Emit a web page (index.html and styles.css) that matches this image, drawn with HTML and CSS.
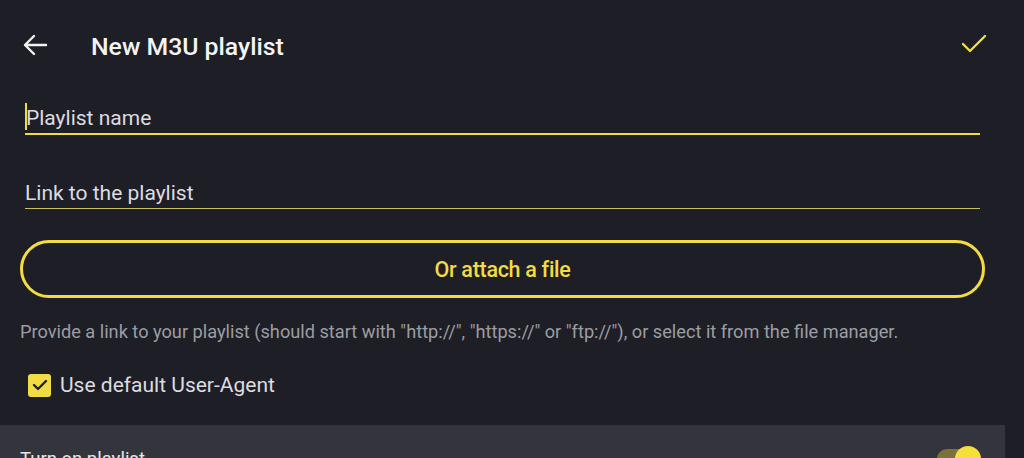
FILE: index.html
```html
<!DOCTYPE html>
<html>
<head>
<meta charset="utf-8">
<link rel="stylesheet" href="styles.css">
</head>
<body>
<div class="screen">
  <header class="topbar">
    <svg class="back" width="26" height="24" viewBox="0 0 26 24">
      <path d="M24 12 H3 M12 3 L3 12 L12 21" fill="none" stroke="#f2f2f2" stroke-width="2.4" stroke-linecap="round" stroke-linejoin="round"/>
    </svg>
    <h1 class="title">New M3U playlist</h1>
    <svg class="done" width="26" height="20" viewBox="0 0 26 20">
      <path d="M2 10 L9 17 L24 2" fill="none" stroke="#f1dc45" stroke-width="2.4" stroke-linecap="round" stroke-linejoin="round"/>
    </svg>
  </header>

  <div class="form">
    <div class="field field-active"><span class="caret"></span><span class="placeholder">Playlist name</span></div>
    <div class="field field-idle"><span class="placeholder">Link to the playlist</span></div>
  </div>

  <div class="attach">Or attach a file</div>

  <p class="hint">Provide a link to your playlist (should start with "http://", "https://" or "ftp://"), or select it from the file manager.</p>

  <label class="check-row">
    <span class="checkbox">
      <svg width="16" height="12" viewBox="0 0 16 12"><path d="M2 6 L6 10 L14 2" fill="none" stroke="#1e1f26" stroke-width="2.4" stroke-linecap="round" stroke-linejoin="round"/></svg>
    </span>
    <span class="check-label">Use default User-Agent</span>
  </label>

  <section class="panel">
    <span class="panel-label">Turn on playlist</span>
    <span class="toggle"><span class="toggle-thumb"></span></span>
  </section>
</div>
</body>
</html>
```

FILE: styles.css
```css
html, body {
  margin: 0;
  padding: 0;
  background: #1e1f26;
  height: 100%;
  overflow: hidden;
}

.screen {
  font-family: Roboto, "Noto Sans", sans-serif;
  color: #e2e2e4;
  width: 1024px;
  height: 458px;
  overflow: hidden;
}

.topbar {
  height: 92px;
  display: flex;
  align-items: center;
  padding: 0 37px 0 22px;
  box-sizing: border-box;
}

.back {
  display: block;
  margin-top: -3px;
}

.title {
  margin: 0 0 0 43px;
  font-size: 24.8px;
  font-weight: 500;
  color: #f4f4f5;
  flex: 1;
}

.done {
  display: block;
  margin-top: -4px;
}

.form {
  padding: 11px 44px 0 25px;
}

.field {
  height: 30px;
  line-height: 30px;
  font-size: 21px;
  font-weight: 400;
  color: #dcdce0;
  display: flex;
  align-items: center;
}

.field-active {
  border-bottom: 2px solid #f1dc45;
}

.field-idle {
  margin-top: 43px;
  border-bottom: 1px solid #c9bf63;
}

.caret {
  display: inline-block;
  width: 2px;
  height: 27px;
  background: #f1dc45;
  margin-right: -1px;
  margin-top: -3px;
}

.attach {
  margin: 31px 39px 0 20px;
  height: 58px;
  box-sizing: border-box;
  border: 3px solid #f1dc45;
  border-radius: 29px;
  display: flex;
  align-items: center;
  justify-content: center;
  color: #f1dc45;
  font-size: 21.5px;
  font-weight: 500;
  letter-spacing: -0.3px;
}

.hint {
  margin: 23px 0 0 20px;
  font-size: 18.2px;
  line-height: 22px;
  font-weight: 400;
  color: #9c9da3;
}

.check-row {
  display: flex;
  align-items: center;
  margin: 30px 0 0 28px;
  height: 24px;
}

.checkbox {
  width: 23px;
  height: 23px;
  border-radius: 3px;
  background: #f1dc45;
  display: flex;
  align-items: center;
  justify-content: center;
}

.checkbox svg {
  display: block;
}

.check-label {
  margin-left: 9px;
  font-size: 21px;
  color: #dcdce0;
}

.panel {
  margin: 28px 19px 0 0;
  height: 60px;
  background: #34353c;
  display: flex;
  justify-content: space-between;
  align-items: flex-start;
  padding: 22px 30px 0 20px;
  box-sizing: border-box;
}

.panel-label {
  font-size: 18.5px;
  color: #e6e6e8;
  line-height: 24px;
}

.toggle {
  position: relative;
  width: 38px;
  height: 20px;
  border-radius: 10px;
  background: #7a7339;
  margin-top: 2px;
}

.toggle-thumb {
  position: absolute;
  right: -6px;
  top: -3px;
  width: 26px;
  height: 26px;
  border-radius: 50%;
  background: #f5df3a;
}
```
